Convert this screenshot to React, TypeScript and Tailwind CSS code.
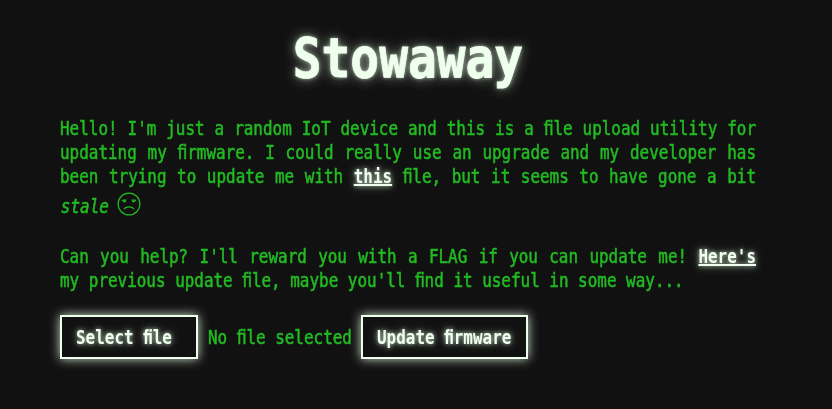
import type { ReactNode } from 'react';

const glow = '[text-shadow:0_0_5px_#e8ffe8b0,0_0_10px_#e8ffe880]';

// A condensed terminal line: text is set wide and narrowed to a 9.6px pitch.
function Line({ children, justify = false }: { children: ReactNode; justify?: boolean }) {
  return (
    <div className="h-6 w-[696px]">
      <div
        className={`w-[809.3px] origin-left scale-x-[0.86] whitespace-nowrap text-[18.54px] leading-6 ${
          justify ? '[text-align-last:justify]' : ''
        }`}
      >
        {children}
      </div>
    </div>
  );
}

function Condensed({ children, className }: { children: ReactNode; className: string }) {
  return (
    <span className={`block origin-left scale-x-[0.86] whitespace-nowrap text-[18.54px] leading-6 ${className}`}>
      {children}
    </span>
  );
}

function TextLink({ children }: { children: ReactNode }) {
  return (
    <a
      href="#"
      className={`font-bold text-[#efffee] underline decoration-2 underline-offset-[1px] [text-decoration-skip-ink:none] [-webkit-text-stroke:0px] ${glow}`}
    >
      {children}
    </a>
  );
}

const button =
  'h-11 shrink-0 overflow-visible border-2 border-[#efffee] pl-[14px] pt-[2px] text-left font-bold text-[#efffee] shadow-[0_0_10px_#e8ffe8e0] [-webkit-text-stroke:0px]';

function SadFace() {
  return (
    <svg viewBox="0 0 24 24" className="ml-[9px] h-6 w-6" fill="none" stroke="currentColor" strokeWidth="1.2">
      <circle cx="12" cy="12" r="10.9" />
      <path d="M7 17.2c1.6-3 8.4-3 10 0" />
      <path d="M5 9l1-1h3.6M19 9l-1-1h-3.6" />
      <ellipse cx="7.6" cy="9.2" rx="1.3" ry="1.3" fill="currentColor" stroke="none" />
      <ellipse cx="16.4" cy="9.2" rx="1.3" ry="1.3" fill="currentColor" stroke="none" />
    </svg>
  );
}

export default function App() {
  return (
    <main className="h-[409px] w-[832px] overflow-hidden bg-[#111] pl-[60px] font-['DejaVu_Sans_Mono',monospace] text-[#22bb22] [-webkit-text-stroke:0.55px]">
      <h1 className="flex h-[117px] w-[696px] justify-center pt-[26px]">
        <span className="block scale-x-[0.86] text-[55.63px] font-bold leading-[64px] text-[#efffee] [-webkit-text-stroke:0.8px] [text-shadow:0_0_5px_#e8ffe8b0,0_0_14px_#e8ffe890]">
          Stowaway
        </span>
      </h1>
      <section>
        <Line justify>Hello! I'm just a random IoT device and this is a ﬁle upload utility for</Line>
        <Line justify>updating my ﬁrmware. I could really use an upgrade and my developer has</Line>
        <Line justify>
          been trying to update me with <TextLink>this</TextLink> ﬁle, but it seems to have gone a bit
        </Line>
        <div className="flex h-14 items-start pt-[3px]">
          <Condensed className="mt-[3px] w-[48px] pl-px italic">stale</Condensed>
          <SadFace />
        </div>
      </section>
      <section>
        <Line justify>
          Can you help? I'll reward you with a FLAG if you can update me! <TextLink>Here's</TextLink>
        </Line>
        <Line>my previous update ﬁle, maybe you'll ﬁnd it useful in some way...</Line>
      </section>
      <form className="mt-[22px] flex items-center">
        <button type="button" className={`${button} w-[138px]`}>
          <Condensed className={glow}>Select ﬁle</Condensed>
        </button>
        <Condensed className="ml-[9.5px] w-[153.5px] shrink-0 pt-[2px]">No ﬁle selected</Condensed>
        <button type="button" className={`${button} w-[167px]`}>
          <Condensed className={glow}>Update ﬁrmware</Condensed>
        </button>
      </form>
    </main>
  );
}
